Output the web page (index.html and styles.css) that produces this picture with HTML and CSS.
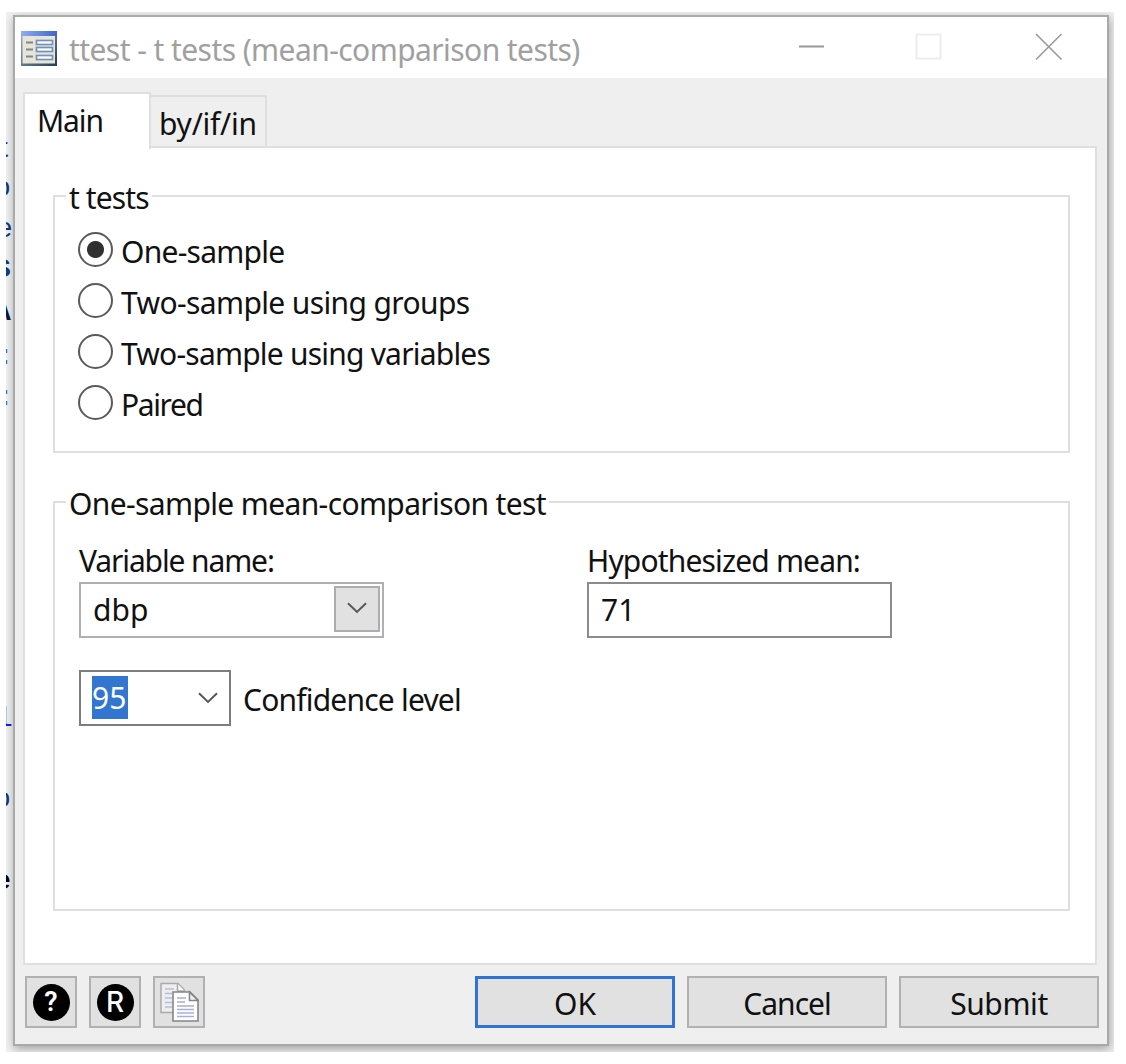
FILE: index.html
```
<!DOCTYPE html>
<html lang="en">
<head>
<meta charset="utf-8">
<title>ttest - t tests (mean-comparison tests)</title>
<link rel="stylesheet" href="styles.css">
</head>
<body>
<main class="desktop">
  <div class="behind" aria-hidden="true">
    <span class="frag f1">t</span>
    <span class="frag f2">o</span>
    <span class="frag f3">e</span>
    <span class="frag f4">S</span>
    <span class="frag f5">A</span>
    <span class="frag f6">:</span>
    <span class="frag f7">:</span>
    <span class="frag f8">l</span>
    <span class="frag f9">o</span>
    <span class="frag f10">e</span>
  </div>
  <section class="window">
    <header class="titlebar">
      <svg class="app-icon" width="36" height="35" viewBox="0 0 36 35">
        <defs><linearGradient id="bar"><stop offset="0" stop-color="#91adf0"/><stop offset="1" stop-color="#3c66c9"/></linearGradient>
        <linearGradient id="frame" x2="1" y2="1"><stop offset="0" stop-color="#9db4cf"/><stop offset="1" stop-color="#243b55"/></linearGradient></defs>
        <rect width="36" height="35" fill="url(#frame)"/>
        <rect x="1.500" y="5" width="32.500" height="27.500" fill="#e6e5d6"/>
        <rect width="36" height="5" fill="url(#bar)"/>
        <path d="M5 11.500h7M5 18.500h7M5 25.500h7" stroke="#7d8794" stroke-width="2"/>
        <g fill="#fff" stroke="#7292bd" stroke-width="1.700"><rect x="15.500" y="9.500" width="16" height="4"/><rect x="15.500" y="16.500" width="16" height="4"/><rect x="15.500" y="24.500" width="16" height="4"/></g>
      </svg>
      <h1 class="title"><span class="t t-title">ttest - t tests (mean-comparison tests)</span></h1>
      <svg class="controls" width="264" height="28" viewBox="0 0 264 28" fill="none">
        <path d="M0 13.500h25" stroke="#999" stroke-width="2"/>
        <rect x="117.500" y="1.500" width="24" height="24" stroke="#ebebeb" stroke-width="1.700"/>
        <path d="M237 1l25.500 25.500M262.500 1L237 26.500" stroke="#9c9c9c" stroke-width="1.700"/>
      </svg>
    </header>
    <nav class="tabs">
      <div class="tab active"><span class="t t-main">Main</span></div>
      <div class="tab"><span class="t t-by">by/if/in</span></div>
    </nav>
    <div class="panel">
      <fieldset class="group tests">
        <legend><span class="t t-tests">t tests</span></legend>
        <div class="radio"><i class="dot on"></i><span class="t t-one">One-sample</span></div>
        <div class="radio"><i class="dot"></i><span class="t t-groups">Two-sample using groups</span></div>
        <div class="radio"><i class="dot"></i><span class="t t-vars">Two-sample using variables</span></div>
        <div class="radio"><i class="dot"></i><span class="t t-paired">Paired</span></div>
      </fieldset>
      <fieldset class="group options">
        <legend><span class="t t-group2">One-sample mean-comparison test</span></legend>
        <div class="fields">
          <div class="field">
            <div class="label"><span class="t t-varname">Variable name:</span></div>
            <div class="box combo"><span class="t t-dbp">dbp</span>
              <span class="drop"><svg width="20" height="12" viewBox="0 0 20 12"><path d="M1 1.200l9 8.800 9-8.800" fill="none" stroke="#555" stroke-width="1.900"/></svg></span>
            </div>
          </div>
          <div class="field">
            <div class="label"><span class="t t-hyp">Hypothesized mean:</span></div>
            <div class="box"><span class="t t-71">71</span></div>
          </div>
        </div>
        <div class="level">
          <div class="box small"><span class="selected"><span class="t t-95">95</span></span>
            <svg width="20" height="12" viewBox="0 0 20 12"><path d="M1 1.200l9 8.800 9-8.800" fill="none" stroke="#555" stroke-width="1.900"/></svg>
          </div>
          <span class="t t-conf">Confidence level</span>
        </div>
      </fieldset>
    </div>
    <footer class="footer">
      <div class="tools">
        <div class="tool"><span class="disc help">?</span></div>
        <div class="tool"><span class="disc reset">R</span></div>
        <div class="tool">
          <svg width="40" height="40" viewBox="0 0 40 40">
            <path d="M2 1.500h17l6.500 6.500v22.500H2z" fill="#eee" stroke="#aaa" stroke-width="1.500"/>
            <path d="M18.500 1.500v7.500h7" fill="#f8f8f8" stroke="#aaa" stroke-width="1.500"/>
            <path d="M6 7h9M6 11.500h7M6 16h7M6 20.500h7M6 25h7" stroke="#b9bddb" stroke-width="1.500"/>
            <path d="M14 10h17l8 8v21H14z" fill="#fff" stroke="#858585" stroke-width="1.600"/>
            <path d="M30.500 10v8.500H39z" fill="#f2f2f2" stroke="#858585" stroke-width="1.600"/>
            <path d="M18 16h9M18 20h8M18 24h17M18 27.500h17M18 31h17M18 34.500h17" stroke="#a9afd6" stroke-width="1.500"/>
          </svg>
        </div>
      </div>
      <div class="actions">
        <div class="button default"><span class="t t-ok">OK</span></div>
        <div class="button"><span class="t t-cancel">Cancel</span></div>
        <div class="button"><span class="t t-submit">Submit</span></div>
      </div>
    </footer>
  </section>
</main>
</body>
</html>
```

FILE: styles.css
```
* { box-sizing: border-box; }
body { margin: 0; width: 1126px; height: 1064px; padding: 12px 12px 12px 6px; background: #fff; overflow: hidden;
  font: 30px/40px "Noto Sans", "Open Sans", sans-serif; color: #111; }
.desktop { position: relative; width: 1108px; height: 1040px; padding: 3px 4px 6px 7px; background: #f0f0f0; overflow: hidden; }
.behind { position: absolute; left: 0; top: 0; width: 9px; height: 1040px; overflow: hidden; font: 28px/32px "Liberation Mono", monospace; }
.frag { position: absolute; left: -12px; color: #123a78; }
.f1 { top: 122px; }
.f2 { top: 161px; }
.f3 { top: 202px; left: -10px; }
.f4 { top: 242px; font-weight: bold; }
.f5 { top: 285px; font-weight: bold; color: #0b1a38; }
.f6 { top: 329px; left: -9px; color: #2f6fc4; }
.f7 { top: 370px; left: -9px; color: #2f6fc4; }
.f8 { top: 691px; left: -10px; color: #2a10f0; }
.f9 { top: 772px; }
.f10 { top: 854px; font-weight: bold; color: #000; }

.window { position: relative; display: flex; flex-direction: column; width: 1096px; height: 1031px; background: #efefef;
  border: 2px solid #a9a9a9; box-shadow: 1px 3px 9px rgba(0,0,0,.33); }
.t { display: inline-block; white-space: nowrap; }
.t-title { letter-spacing: -.57px; }
.t-main { letter-spacing: -1.1px; }
.t-by { letter-spacing: -.25px; }
.t-tests { letter-spacing: -.9px; }
.t-one { letter-spacing: -.75px; }
.t-groups { letter-spacing: -.62px; }
.t-vars { letter-spacing: -.79px; }
.t-paired { letter-spacing: -1.4px; }
.t-group2 { letter-spacing: -.63px; }
.t-varname { letter-spacing: -1.12px; }
.t-hyp { letter-spacing: -.84px; }
.t-conf { letter-spacing: -.8px; }
.t-cancel { letter-spacing: -1px; }
.t-submit { letter-spacing: -.4px; }

.titlebar { display: flex; align-items: flex-start; height: 61px; padding: 14px 0 0 6px; background: #fff; }
.app-icon { flex: none; }
.title { flex: 1; margin: -1px 0 0 12px; font-size: 30px; font-weight: 400; line-height: 40px; color: #a0a0a0; }
.controls { flex: none; margin: 2px 44px 0 0; }
.tabs { display: flex; align-items: flex-end; height: 69px; padding-left: 8px; }
.tab { width: 116px; height: 52px; padding: 7px 0 0 8px; border: 2px solid #dfdfdf; border-width: 2px 2px 0 0; }
.tab.active { z-index: 1; width: 128px; height: 57px; margin-bottom: -2px; padding: 7px 0 0 12px; border-width: 2px 2px 0 2px; background: #fff; }
.panel { display: flex; flex-direction: column; gap: 30px; width: 1074px; height: 819px; margin: -1px 0 0 8px; padding: 29px 0 0 28px; border: 2px solid #dfdfdf; background: #fff; }
.group { width: 1017px; margin: 0; padding: 0 0 0 11px; border: 2px solid #dfdfdf; }
.group legend { height: 38px; padding: 3px 3px 0; line-height: 35px; }
.tests { height: 276px; }
.options { height: 428px; }
.radio { display: flex; gap: 8px; height: 51px; padding-left: 12px; }
.tests legend + .radio { margin-top: 9px; }
.dot { display: block; width: 35px; height: 35px; margin-top: 8px; border: 2px solid #5a5a5a; border-radius: 50%; }
.dot.on { background: radial-gradient(circle, #303030 8px, transparent 9px); }
.radio .t { margin-top: 8px; }
.fields { display: flex; gap: 203px; padding: 20px 0 0 13px; }
.field { width: 305px; }
.label { height: 41px; }
.box { display: flex; align-items: center; width: 305px; height: 56px; padding: 0 0 0 12px; border: 2px solid #8b8b8b; background: #fff; }
.combo { justify-content: space-between; padding: 0 2px 0 12px; border-color: #afafb5; }
.drop { display: grid; place-items: center; width: 46px; height: 46px; margin-bottom: 3px; padding-bottom: 2px; border: 2px solid #adadad; background: #e1e1e1; }
.level { display: flex; gap: 12px; padding: 32px 0 0 13px; }
.small { justify-content: space-between; width: 152px; padding: 0 11px 0 11px; border-color: #7d7d7d; }
.selected { width: 36px; height: 43px; padding-top: 2px; margin-bottom: 2px; background: #3276d1; color: #fff; }
.level > .t { margin-top: 10px; }
.footer { display: flex; justify-content: space-between; padding: 11px 8px 0 10px; }
.tools { display: flex; gap: 12px; }
.tool { display: grid; place-items: center; width: 52px; height: 52px; border: 2px solid #b1b1b1; background: #e1e1e1; }
.disc { width: 37px; height: 37px; border-radius: 50%; background: #000; color: #fff; text-align: center; font: 600 27px/37px Roboto, sans-serif; }
.reset { font: 500 28px/37px Inter, sans-serif; }
.actions { display: flex; gap: 12px; }
.button { display: flex; justify-content: center; width: 200px; height: 52px; padding-top: 6px; border: 2px solid #b1b1b1; background: #e1e1e1; }
.button.default { padding-top: 5px; border: 3px solid #2f74d4; }
```
